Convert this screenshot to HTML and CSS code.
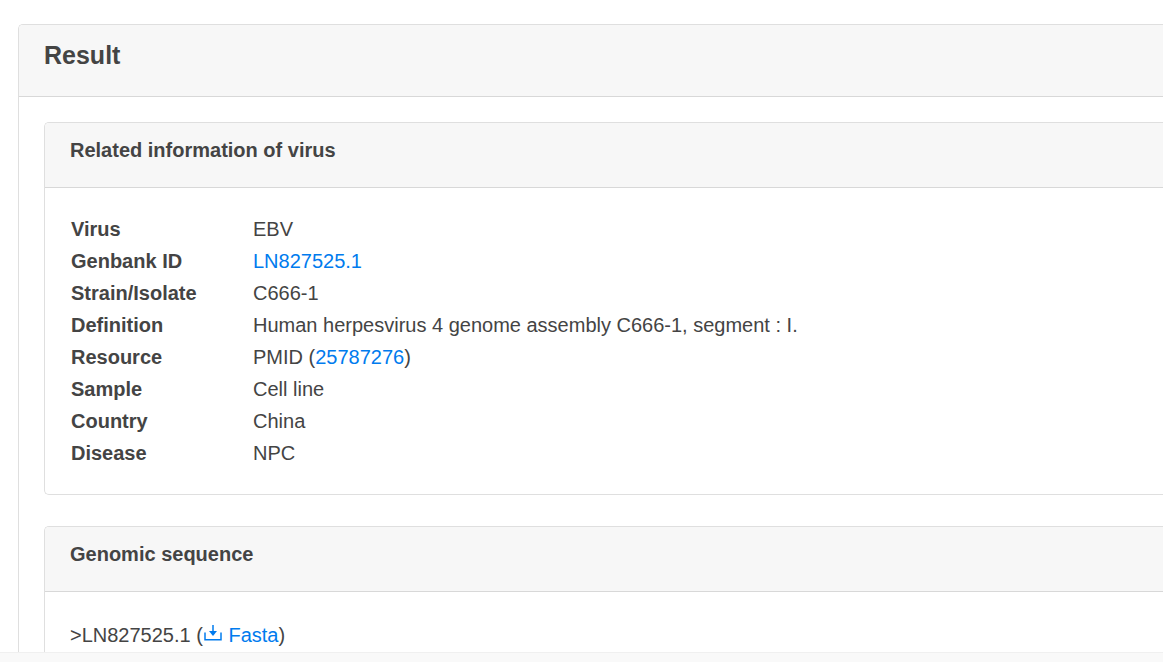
FILE: index.html
```
<!DOCTYPE html>
<html lang="en">
<head>
  <meta charset="UTF-8">
  <meta name="viewport" content="width=device-width, initial-scale=1.0">
  <title>Result</title>
  <link rel="stylesheet" href="styles.css">
</head>
<body>

  <main class="content">
    <section class="card result-card">
      <div class="card-header">
        <h1>Result</h1>
      </div>
      <div class="card-body result-body">

        <!-- Virus information -->
        <section class="card">
          <div class="card-header">
            <h2>Related information of virus</h2>
          </div>
          <div class="card-body">
            <table class="info-table">
              <tbody>
                <tr><th scope="row">Virus</th><td>EBV</td></tr>
                <tr><th scope="row">Genbank ID</th><td><a href="#sequence">LN827525.1</a></td></tr>
                <tr><th scope="row">Strain/Isolate</th><td>C666-1</td></tr>
                <tr><th scope="row">Definition</th><td>Human herpesvirus 4 genome assembly C666-1, segment : I.</td></tr>
                <tr><th scope="row">Resource</th><td>PMID (<a href="#pubmed">25787276</a>)</td></tr>
                <tr><th scope="row">Sample</th><td>Cell line</td></tr>
                <tr><th scope="row">Country</th><td>China</td></tr>
                <tr><th scope="row">Disease</th><td>NPC</td></tr>
              </tbody>
            </table>
          </div>
        </section>

        <!-- Sequence -->
        <section class="card" id="sequence">
          <div class="card-header">
            <h2>Genomic sequence</h2>
          </div>
          <div class="card-body">
            <p class="sequence-name">&gt;LN827525.1 (<a href="#fasta"><svg class="download-icon" width="20" height="17" viewBox="0 0 20 17" aria-hidden="true"><path d="M2 7.5v7.2h16V7.5" fill="none" stroke="currentColor" stroke-width="1.5"/><path d="M10 0v7" fill="none" stroke="currentColor" stroke-width="1.5"/><path d="M6 6h8l-4 5z" fill="currentColor"/></svg> Fasta</a>)</p>
          </div>
        </section>

      </div>
    </section>
  </main>

  <footer class="footer"></footer>

</body>
</html>
```
FILE: styles.css
```
* {
  box-sizing: border-box;
}

body {
  display: flex;
  flex-direction: column;
  height: 100vh;
  margin: 0;
  font-family: Arial, "Liberation Sans", sans-serif;
  font-size: 20px;
  line-height: 30px;
  color: #444;
  background-color: #fff;
}

a {
  color: #007bee;
  text-decoration: none;
}

a:hover {
  text-decoration: underline;
}

h1, h2, p {
  margin: 0;
}

h1 {
  font-size: 25px;
}

h2 {
  font-size: 20px;
}

.content {
  flex: 1;
  min-height: 0;
  padding: 24px 0 0 18px;
  overflow: hidden;
}

.card {
  border: 1px solid #dfdfdf;
  border-right: none;
  border-radius: 5px 0 0 5px;
  overflow: hidden;
}

.card-header {
  padding: 12px 25px 22px;
  background-color: #f7f7f7;
  border-bottom: 1px solid #d8d8d8;
}

.result-card > .card-header {
  padding: 15px 25px 26px;
}

.card-body {
  padding: 25px;
}

.result-body {
  display: flex;
  flex-direction: column;
  gap: 31px;
  padding-right: 0;
}

.info-table {
  border-collapse: collapse;
}

.info-table th,
.info-table td {
  padding: 1px;
  text-align: left;
}

.info-table th {
  width: 182px;
}

.sequence-name {
  padding: 3px 0;
}

.download-icon {
  vertical-align: 0;
}

.footer {
  height: 10px;
  background-color: #f9f9f9;
  border-top: 1px solid #f0f0f0;
}
```
